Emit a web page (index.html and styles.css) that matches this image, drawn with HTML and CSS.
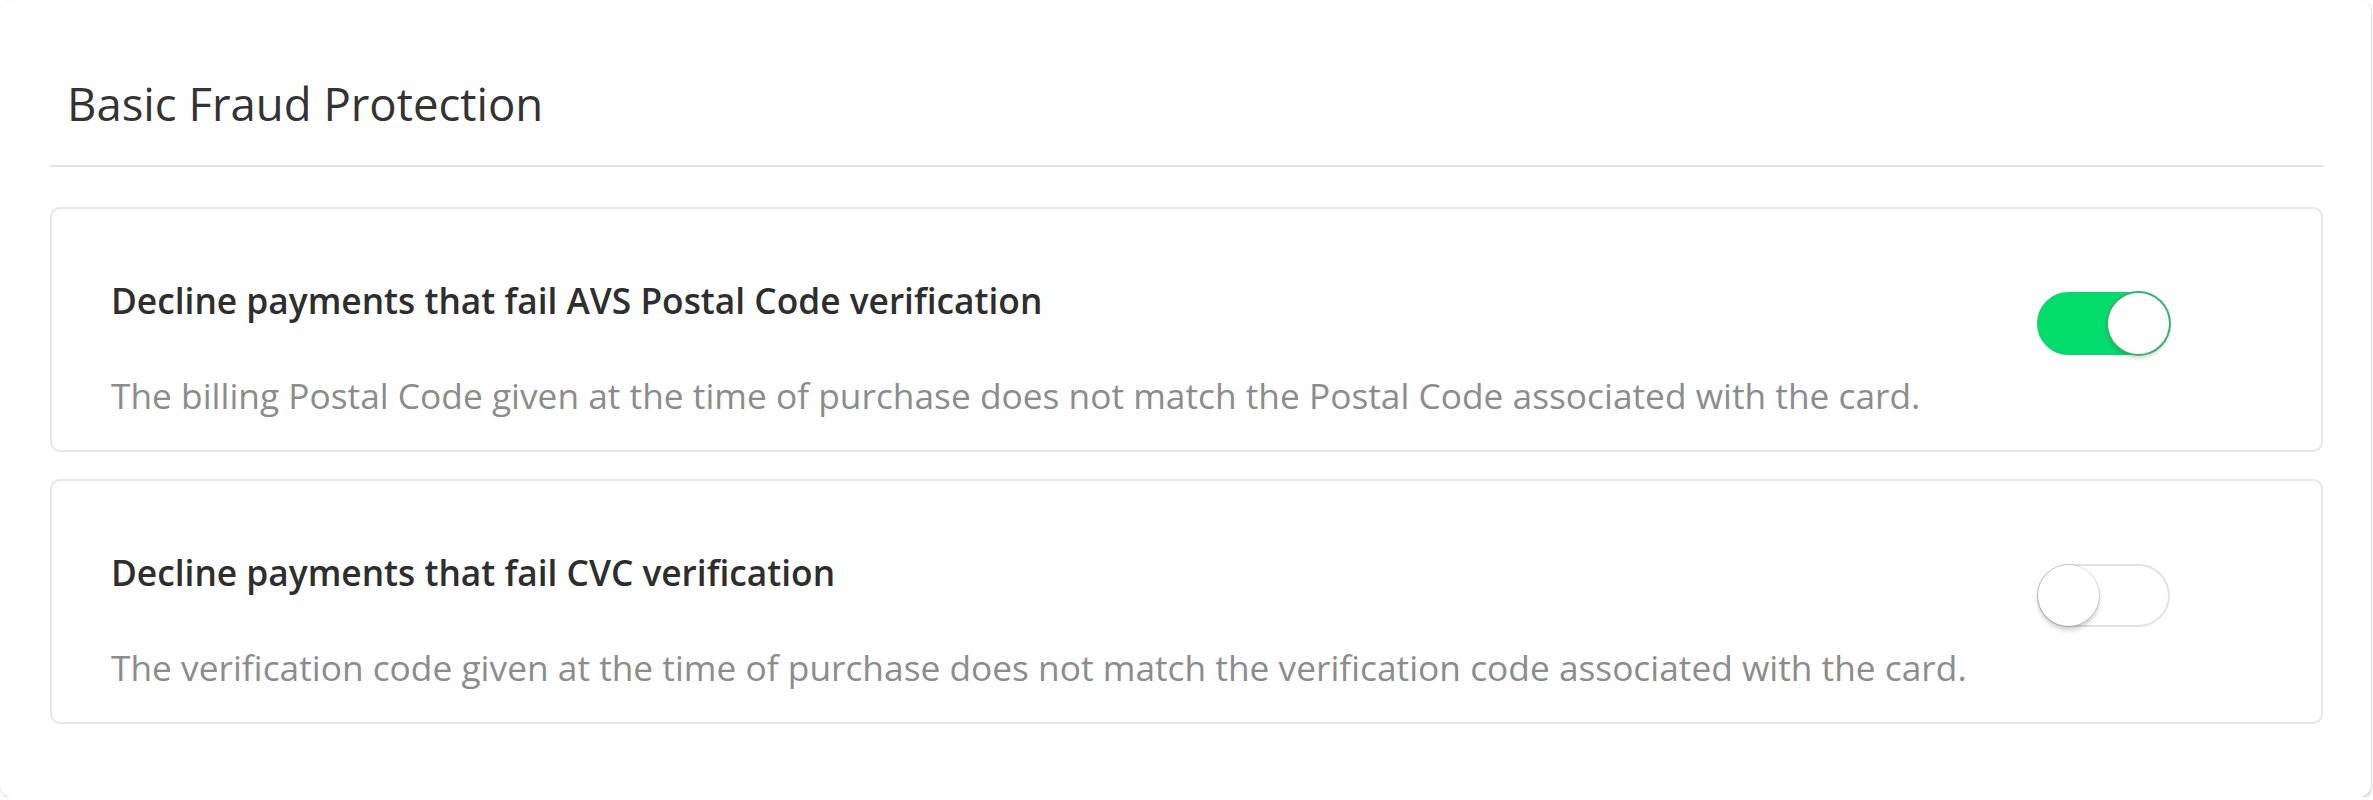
FILE: index.html
```html
<!DOCTYPE html>
<html lang="en">

<head>
	<meta charset="UTF-8">
	<meta name="viewport" content="width=device-width, initial-scale=1.0">
	<title>Basic Fraud Protection</title>
	<link rel="stylesheet" href="styles.css">
</head>

<body>
	<section class="panel">
		<h1 class="panelTitle">Basic Fraud Protection</h1>

		<div class="rule">
			<div class="ruleText">
				<h2>Decline payments that fail AVS Postal Code verification</h2>
				<p>The billing Postal Code given at the time of purchase does not match the Postal Code associated with the card.</p>
			</div>
			<label class="toggle">
				<input type="checkbox" checked>
				<span class="track"><span class="knob"></span></span>
			</label>
		</div>

		<div class="rule">
			<div class="ruleText">
				<h2>Decline payments that fail CVC verification</h2>
				<p>The verification code given at the time of purchase does not match the verification code associated with the card.</p>
			</div>
			<label class="toggle">
				<input type="checkbox">
				<span class="track"><span class="knob"></span></span>
			</label>
		</div>
	</section>
</body>

</html>
```

FILE: styles.css
```css
body {
	margin: 0;
	font-family: "Open Sans", Arial, sans-serif;
	color: #333;
	background-color: #fff;
}

.panel {
	box-sizing: border-box;
	width: 2371px;
	height: 797px;
	padding: 0 48px 0 50px;
	border-radius: 12px;
	background-color: #fff;
	box-shadow: 1px 2px 3px rgba(0, 0, 0, 0.16), 0 0 1px rgba(0, 0, 0, 0.08);
	overflow: hidden;
}

.panelTitle {
	margin: 0 0 40px;
	padding: 73px 0 31px 17px;
	border-bottom: 2px solid #e4e4e4;
	font-size: 45.5px;
	font-weight: 400;
	line-height: 61px;
	color: #333;
}

.rule {
	display: flex;
	align-items: flex-start;
	margin-bottom: 27px;
	padding: 68px 151px 32px 59px;
	border: 2px solid #e6e6e6;
	border-radius: 10px;
}

.ruleText {
	flex: 1;
}

.ruleText h2 {
	margin: 0 0 49px;
	font-size: 35.3px;
	font-weight: 600;
	line-height: 46px;
	color: #2e2e2e;
}

.ruleText p {
	margin: 0;
	font-size: 35.3px;
	line-height: 46px;
	color: #8c8c8c;
}

.toggle {
	margin-top: 15px;
	cursor: pointer;
}

.toggle input {
	display: none;
}

.track {
	position: relative;
	display: block;
	box-sizing: border-box;
	width: 133px;
	height: 63px;
	border: 2px solid #e2e2e2;
	border-radius: 32px;
	background-color: #fff;
}

.knob {
	position: absolute;
	top: -1px;
	left: -1px;
	width: 61px;
	height: 61px;
	border-radius: 50%;
	background-color: #fff;
	box-shadow: 0 0 0 1px rgba(0, 0, 0, 0.12), 0 4px 5px rgba(0, 0, 0, 0.2);
}

.toggle input:checked + .track {
	border-color: #04d96a;
	background-color: #04dd6b;
}

.toggle input:checked + .track .knob {
	left: auto;
	right: -1px;
	box-shadow: 0 0 0 2px #33b36c, 0 4px 5px rgba(0, 0, 0, 0.18);
}
```
